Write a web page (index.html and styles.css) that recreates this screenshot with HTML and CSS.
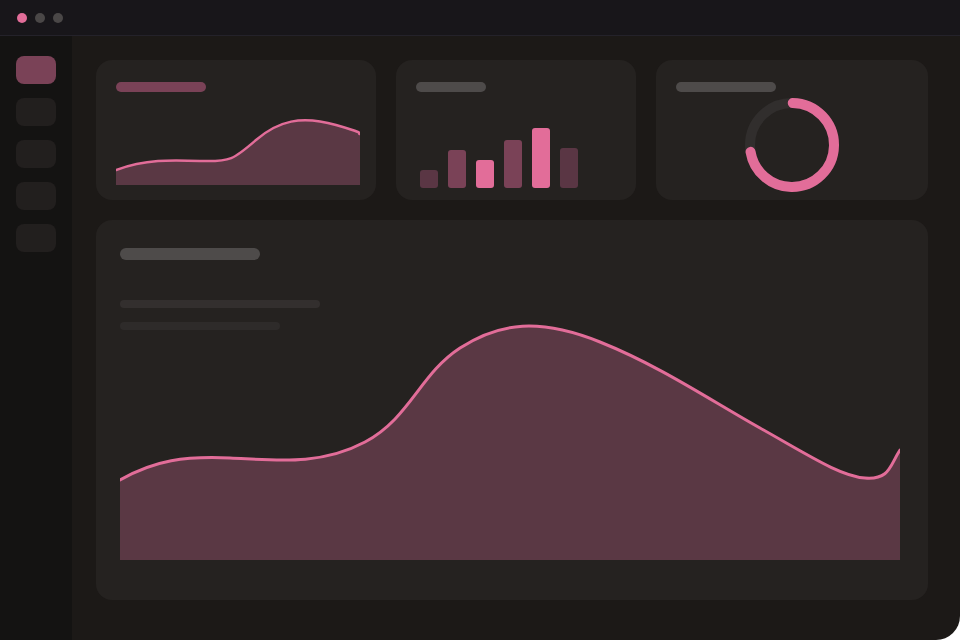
FILE: index.html
```html
<!DOCTYPE html>
<html lang="en">
<head>
<meta charset="utf-8">
<title>Dashboard</title>
<link rel="stylesheet" href="styles.css">
</head>
<body>
<div class="window">
  <header class="titlebar">
    <span class="dot dot-pink"></span>
    <span class="dot"></span>
    <span class="dot"></span>
  </header>
  <div class="body">
    <nav class="sidebar">
      <span class="nav-item active"></span>
      <span class="nav-item"></span>
      <span class="nav-item"></span>
      <span class="nav-item"></span>
      <span class="nav-item"></span>
    </nav>
    <main class="main">
      <section class="cards">
        <div class="card card-line">
          <span class="bar-label label-pink w90"></span>
          <svg class="mini-chart" width="244" height="72" viewBox="0 0 244 72">
            <path d="M0,57 C30,46 55,47 85,48 S118,46 140,27 S185,2 220,12 S240,20 244,21 L244,72 L0,72 Z" fill="#5a3844"/>
            <path d="M0,57 C30,46 55,47 85,48 S118,46 140,27 S185,2 220,12 S240,20 244,21" fill="none" stroke="#e26d99" stroke-width="2.5" stroke-linecap="round"/>
          </svg>
        </div>
        <div class="card card-bars">
          <span class="bar-label label-gray w70"></span>
          <div class="bars">
            <span class="bar b-dark" style="height:18px"></span>
            <span class="bar b-mid" style="height:38px"></span>
            <span class="bar b-pink" style="height:28px"></span>
            <span class="bar b-mid" style="height:48px"></span>
            <span class="bar b-pink" style="height:60px"></span>
            <span class="bar b-dark" style="height:40px"></span>
          </div>
        </div>
        <div class="card card-donut">
          <span class="bar-label label-gray w100"></span>
          <svg class="donut" width="96" height="96" viewBox="0 0 96 96">
            <circle cx="48" cy="48" r="42" fill="none" stroke="#312e2d" stroke-width="10"/>
            <circle cx="48" cy="48" r="42" fill="none" stroke="#e26d99" stroke-width="10" stroke-linecap="round" stroke-dasharray="190 264" transform="rotate(-89 48 48)"/>
          </svg>
        </div>
      </section>
      <section class="card big-card">
        <div class="big-head">
          <span class="bar-label label-gray big-title"></span>
          <span class="text-line tl1"></span>
          <span class="text-line tl2"></span>
        </div>
        <svg class="big-chart" width="780" height="240" viewBox="0 0 780 240">
          <path d="M0,160 C35,140 65,136 110,138 S200,146 245,122 S300,54 340,28 S420,-2 480,22 S590,80 640,108 S720,156 745,158 S770,145 780,130 L780,240 L0,240 Z" fill="#5a3844"/>
          <path d="M0,160 C35,140 65,136 110,138 S200,146 245,122 S300,54 340,28 S420,-2 480,22 S590,80 640,108 S720,156 745,158 S770,145 780,130" fill="none" stroke="#e26d99" stroke-width="3" stroke-linecap="round"/>
        </svg>
      </section>
    </main>
  </div>
</div>
</body>
</html>
```
FILE: styles.css
```css
* { box-sizing: border-box; }
html, body { margin: 0; padding: 0; }
body {
  background: #ffffff;
  font-family: "Liberation Sans", Arial, sans-serif;
}
.window {
  width: 960px;
  height: 640px;
  display: flex;
  flex-direction: column;
  background: #1c1917;
  border-bottom-right-radius: 24px;
  overflow: hidden;
}
.titlebar {
  height: 36px;
  flex: none;
  background: #18161a;
  border-bottom: 1px solid #24222a;
  display: flex;
  align-items: center;
  gap: 8px;
  padding-left: 17px;
}
.dot {
  width: 10px;
  height: 10px;
  border-radius: 50%;
  background: #4a4747;
}
.dot-pink { background: #e26d99; }
.body {
  flex: 1;
  display: flex;
  min-height: 0;
}
.sidebar {
  width: 72px;
  flex: none;
  background: #141312;
  display: flex;
  flex-direction: column;
  align-items: center;
  gap: 14px;
  padding-top: 20px;
}
.nav-item {
  width: 40px;
  height: 28px;
  border-radius: 8px;
  background: #221f1e;
}
.nav-item.active { background: #7a4257; }
.main {
  flex: 1;
  padding: 24px 32px 40px 24px;
  display: flex;
  flex-direction: column;
  gap: 20px;
}
.cards {
  display: flex;
  gap: 20px;
  height: 140px;
  flex: none;
}
.card {
  background: #252220;
  border-radius: 16px;
}
.card-line { width: 280px; padding: 22px 16px 15px 20px; display: flex; flex-direction: column; justify-content: space-between; }
.card-bars { width: 240px; padding: 22px 20px 12px 20px; display: flex; flex-direction: column; justify-content: space-between; }
.card-donut { flex: 1; padding: 22px 20px 0 20px; display: flex; flex-direction: column; }
.bar-label {
  display: block;
  height: 10px;
  border-radius: 5px;
}
.label-pink { background: #7a4257; }
.label-gray { background: #4e4b4a; }
.w90 { width: 90px; }
.w70 { width: 70px; }
.w100 { width: 100px; }
.mini-chart { display: block; margin-top: auto; }
.bars {
  display: flex;
  align-items: flex-end;
  gap: 10px;
  padding-left: 4px;
}
.bar {
  width: 18px;
  border-radius: 3px;
}
.b-dark { background: #5a3644; }
.b-mid { background: #7a4257; }
.b-pink { background: #e26d99; }
.donut { display: block; align-self: center; margin-top: 5px; }
.big-card {
  flex: 1;
  display: grid;
  padding: 28px 28px 40px 24px;
}
.big-head, .big-chart { grid-area: 1 / 1; }
.big-head {
  display: flex;
  flex-direction: column;
  align-items: flex-start;
}
.big-title { width: 140px; height: 12px; border-radius: 6px; }
.text-line { display: block; height: 8px; border-radius: 4px; }
.tl1 { width: 200px; background: #332f2e; margin-top: 40px; }
.tl2 { width: 160px; background: #2e2b2a; margin-top: 14px; }
.big-chart { align-self: end; display: block; }
```
